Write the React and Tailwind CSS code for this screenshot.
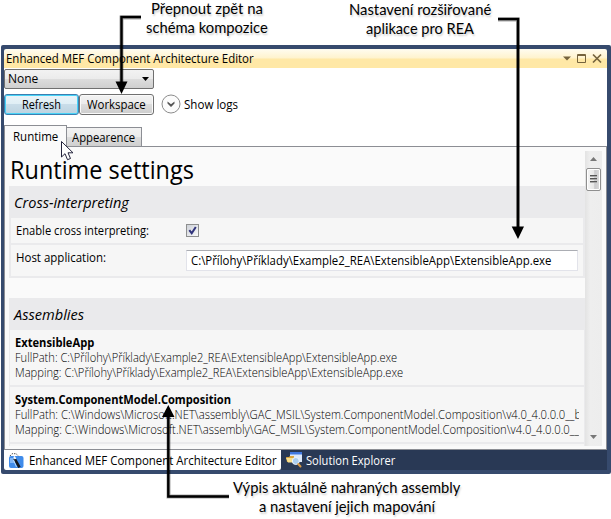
import { useLayoutEffect, useRef, useState } from "react";

// Single line of text condensed or widened to a fixed width.
function Fit({ w, className = "", children }) {
  const ref = useRef(null);
  const [scale, setScale] = useState(1);
  useLayoutEffect(() => {
    setScale(w / ref.current.offsetWidth);
  }, [w]);
  return (
    <span className={"block shrink-0 whitespace-nowrap " + className} style={{ width: w }}>
      <span ref={ref} className="inline-block origin-left" style={{ transform: `scaleX(${scale})` }}>
        {children}
      </span>
    </span>
  );
}

function Callout({ className, children }) {
  return (
    <div
      className={
        "absolute flex flex-col items-center font-['Lato',sans-serif] text-[15px] leading-[19px] text-black [text-shadow:1px_2px_2px_rgba(0,0,0,0.2)] " +
        className
      }
    >
      {children}
    </div>
  );
}

function Assembly({ name, nameWidth, lines }) {
  return (
    <div className="h-[55px] shrink-0 overflow-hidden bg-[#f6f6f6] pt-[5px] pl-[5px]">
      <Fit w={nameWidth} className="h-[15px] leading-[15px] font-bold">{name}</Fit>
      <div className="w-[564px] overflow-hidden font-light text-black">
        {lines.map(([text, w]) => (
          <Fit key={text} w={w} className="h-[15px] leading-[15px]">{text}</Fit>
        ))}
      </div>
    </div>
  );
}

function ToolWindow() {
  return (
    <div className="ml-px flex h-[429px] w-[610px] flex-col rounded-[2px] bg-[#364a6d] pt-[4px] pr-[4px] pb-[4px] pl-[3px]">
      <div className="flex h-[19px] shrink-0 items-center justify-between rounded-t-[2px] bg-[linear-gradient(#fffcf0_0%,#fff3cd_48%,#ffe8a6_52%,#ffe8a6_100%)] pr-[4px] pl-[2px]">
        <Fit w={248} className="leading-[19px]">Enhanced MEF Component Architecture Editor</Fit>
        <svg width="42" height="12" viewBox="0 0 42 12" className="shrink-0" fill="none" stroke="#75633d">
          <path d="M2 3.500h8l-4 4z" fill="#75633d" stroke="none" />
          <path d="M16.500 1.500h8v8h-8zM16 2.500h9" />
          <path d="M32 1.500l8 8M40 1.500l-8 8" strokeWidth="1.700" />
        </svg>
      </div>

      <div className="flex h-[382px] shrink-0 flex-col bg-white">
        <div className="flex h-[79px] shrink-0 flex-col">
          <div className="mt-[1px] flex h-[20px] w-[150px] items-center justify-between rounded-[2px] border border-[#707070] bg-[linear-gradient(#f2f2f2_0%,#ebebeb_50%,#dddddd_50%,#cfcfcf_100%)] pr-[4px] pl-[3px]">
            <Fit w={30} className="leading-[18px]">None</Fit>
            <svg width="7" height="4" viewBox="0 0 7 4"><path d="M0 0h7L3.500 4z" fill="#000" /></svg>
          </div>
          <div className="mt-[5px] flex h-[21px] items-center">
            <div className="flex h-[21px] w-[75px] items-center justify-center rounded-[3px] border border-[#3c7fb1] bg-[linear-gradient(#eaf4f9_0%,#dfeef5_50%,#c9dde9_50%,#bdd3e0_100%)] shadow-[inset_0_0_0_1px_#48d3f7]">
              <Fit w={39} className="leading-[18px]">Refresh</Fit>
            </div>
            <div className="flex h-[21px] w-[75px] items-center justify-center rounded-[3px] border border-[#707070] bg-[linear-gradient(#f3f3f3_0%,#ebebeb_50%,#dddddd_50%,#cdcdcd_100%)] shadow-[inset_0_0_0_1px_#fafafa]">
              <Fit w={59} className="leading-[18px]">Workspace</Fit>
            </div>
            <svg width="20" height="20" viewBox="0 0 20 20" className="-mt-[2px] ml-[7px]" fill="none">
              <circle cx="10" cy="10" r="9" fill="#fcfcfc" stroke="#8c8c8c" />
              <path d="M6.500 7.500v2L10 13l3.500-3.500v-2L10 10.200z" fill="#555" />
            </svg>
            <Fit w={54} className="ml-[3px] leading-[18px]">Show logs</Fit>
          </div>
          <div className="mt-auto flex h-[22px] items-end">
            <div className="z-10 -mb-[1px] flex h-[23px] w-[63px] items-center border border-b-0 border-[#8c8e94] bg-[#fafafa] pl-[8px]">
              <Fit w={45} className="leading-[20px]">Runtime</Fit>
            </div>
            <div className="flex h-[20px] w-[75px] items-center border border-l-0 border-[#8c8e94] bg-[linear-gradient(#f2f2f2_0%,#ebebeb_50%,#dddddd_50%,#cfcfcf_100%)] pl-[5px]">
              <Fit w={63} className="mt-px leading-[18px]">Appearence</Fit>
            </div>
          </div>
        </div>

        <div className="-mt-px flex h-[304px] shrink-0 border border-[#8c8e94] bg-[#fafafa] pt-[4px] pr-[4px] pb-[3px] pl-[4px]">
          <div className="flex w-[576px] shrink-0 flex-col overflow-hidden">
            <Fit w={184} className="ml-px h-[35px] shrink-0 text-[25px] leading-[36px]">Runtime settings</Fit>
            <div className="h-[92px] shrink-0 bg-[#eaeaec]">
              <div className="flex h-[32px] items-center pl-[5px]">
                <Fit w={115} className="text-[15px] leading-[32px] italic">Cross-interpreting</Fit>
              </div>
              <div className="mx-[2px] flex h-[25px] items-center bg-[#f6f6f6] pl-[5px]">
                <Fit w={133} className="leading-[25px]">Enable cross interpreting:</Fit>
                <div className="ml-[37px] flex size-[13px] items-center justify-center border border-[#8e8f8f] bg-[linear-gradient(135deg,#cdd1d8,#fafafa)]">
                  <svg width="9" height="9" viewBox="0 0 9 9" fill="none"><path d="M1.300 4.200L3.700 7.200 7.800 1" stroke="#31347c" strokeWidth="2" /></svg>
                </div>
              </div>
              <div className="mx-[2px] mt-[2px] flex h-[31px] items-center bg-[#f6f6f6] pl-[5px]">
                <Fit w={90} className="-mt-[6px] leading-[25px]">Host application:</Fit>
                <div className="ml-[80px] flex h-[21px] w-[392px] items-center border border-[#e2e3ea] border-t-[#abadb3] bg-white pl-[4px]">
                  <Fit w={360} className="leading-[19px]">{"C:\\Přílohy\\Příklady\\Example2_REA\\ExtensibleApp\\ExtensibleApp.exe"}</Fit>
                </div>
              </div>
            </div>
            <div className="mt-[20px] flex h-[149px] shrink-0 flex-col bg-[#eaeaec] px-[1px]">
              <div className="flex h-[32px] shrink-0 items-center pl-[4px]">
                <Fit w={70} className="text-[15px] leading-[32px] italic">Assemblies</Fit>
              </div>
              <Assembly
                name="ExtensibleApp"
                nameWidth={79}
                lines={[
                  ["FullPath: C:\\Přílohy\\Příklady\\Example2_REA\\ExtensibleApp\\ExtensibleApp.exe", 382],
                  ["Mapping: C:\\Přílohy\\Příklady\\Example2_REA\\ExtensibleApp\\ExtensibleApp.exe", 388],
                ]}
              />
              <div className="h-[2px] shrink-0" />
              <Assembly
                name="System.ComponentModel.Composition"
                nameWidth={216}
                lines={[
                  ["FullPath: C:\\Windows\\Microsoft.NET\\assembly\\GAC_MSIL\\System.ComponentModel.Composition\\v4.0_4.0.0.0__b", 566],
                  ["Mapping: C:\\Windows\\Microsoft.NET\\assembly\\GAC_MSIL\\System.ComponentModel.Composition\\v4.0_4.0.0.0__", 564],
                ]}
              />
              <div className="mt-[2px] h-[3px] shrink-0 bg-[#f6f6f6]" />
            </div>
          </div>
          <div className="flex w-[17px] shrink-0 flex-col items-center bg-[linear-gradient(90deg,#e3e3e3,#eeeeee_30%,#ededed)]">
            <svg width="17" height="17" viewBox="0 0 17 17"><path d="M5 10L8.500 6l3.500 4z" fill="#777" /></svg>
            <div className="flex h-[23px] w-[15px] items-center justify-center rounded-[2px] border border-[#8f8f8f] bg-[linear-gradient(90deg,#f5f5f5,#e8e8e8_50%,#c9c9cb_60%,#dcdcdc)] shadow-[inset_0_0_0_1px_#ffffff]">
              <svg width="7" height="9" viewBox="0 0 7 9" stroke="#555"><path d="M0 .5h7M0 3.500h7M0 6.500h7" /><path d="M0 1.500h7M0 4.500h7M0 7.500h7" stroke="#aaa" /></svg>
            </div>
            <svg width="17" height="17" viewBox="0 0 17 17" className="mt-auto"><path d="M5 6h7l-3.500 4z" fill="#777" /></svg>
          </div>
        </div>
      </div>

      <div className="flex h-[20px] shrink-0 bg-[#293955]">
        <div className="flex h-[20px] w-[277px] items-center rounded-b-[2px] bg-white pl-[5px]">
          <svg width="15" height="15" viewBox="0 0 15 15" className="shrink-0">
            <rect x="0" y="3" width="14.500" height="12" rx="2" fill="#3f8bea" />
            <path d="M1 5h5v5H1z" fill="#82b7f7" />
            <path d="M1 3l2-2.300h4L9.500 3" stroke="#555" fill="none" strokeDasharray="1.500 1" />
            <path d="M5.500 5.500l5 9" stroke="#14181f" strokeWidth="2.600" />
            <path d="M4.500 7l3 7" stroke="#b9dcff" strokeWidth="1" />
            <path d="M5 3.500l1.500 2.500" stroke="#fff" strokeWidth="1.800" />
          </svg>
          <Fit w={248} className="mt-[2px] ml-[5px] leading-[20px]">Enhanced MEF Component Architecture Editor</Fit>
        </div>
        <div className="flex h-[20px] items-center pl-[5px] text-white">
          <svg width="17" height="16" viewBox="0 0 17 16" className="shrink-0">
            <path d="M4 0h12v10H4z" fill="#dce9fb" />
            <path d="M4 0h12v2.500H4z" fill="#3f78e0" />
            <path d="M0 5h3l1-1h4v6H1z" fill="#d9a53f" />
            <path d="M0 6h7l1 4.500H2z" fill="#f8df8e" />
            <circle cx="9.800" cy="9" r="3.500" fill="#a9cdf0" stroke="#eef5fc" />
            <path d="M12.300 12l2.200 2.500" stroke="#d79945" strokeWidth="2" strokeLinecap="round" />
          </svg>
          <Fit w={89} className="mt-[2px] ml-[3px] leading-[20px]">Solution Explorer</Fit>
        </div>
      </div>
    </div>
  );
}

export default function App() {
  return (
    <div className="relative h-[519px] w-[611px] overflow-hidden bg-white pt-[45px] font-['Open_Sans','Noto_Sans',sans-serif] text-[12px] text-black">
      <ToolWindow />

      <Callout className="top-[-1px] left-[146px]">
        <Fit w={112}>Přepnout zpět na</Fit>
        <Fit w={122}>schéma kompozice</Fit>
      </Callout>
      <Callout className="top-0 left-[349px]">
        <Fit w={142}>Nastavení rozšiřované</Fit>
        <Fit w={108}>aplikace pro REA</Fit>
      </Callout>
      <Callout className="top-[478px] left-[233px]">
        <Fit w={227}>Výpis aktuálně nahraných assembly</Fit>
        <Fit w={176}>a nastavení jejich mapování</Fit>
      </Callout>

      {/* Callout arrows and the mouse pointer lie over the window */}
      <svg width="611" height="519" viewBox="0 0 611 519" className="absolute top-0 left-0 z-20" fill="none">
        <g stroke="#000" strokeOpacity="0.35" strokeWidth="4">
          <path d="M141 17.500H121.500V84" />
          <path d="M498 19.500H518V228" />
          <path d="M229 496.500H168.500V416" />
        </g>
        <g stroke="#000" strokeWidth="2.400">
          <path d="M141 17H121.500V84" />
          <path d="M498 19H518V228" />
          <path d="M229 496.500H168.300V416" />
        </g>
        <path d="M115.500 81.500h12L121.500 94zM511.700 226.500h12.300L518 239zM162 417h12.500L168.300 405z" fill="#000" />
        <path d="M61.500 141.500v15.500l3.500-3.300 2.500 6 3-1.200-2.500-5.700h5z" fill="#fff" stroke="#23233c" />
      </svg>
    </div>
  );
}
